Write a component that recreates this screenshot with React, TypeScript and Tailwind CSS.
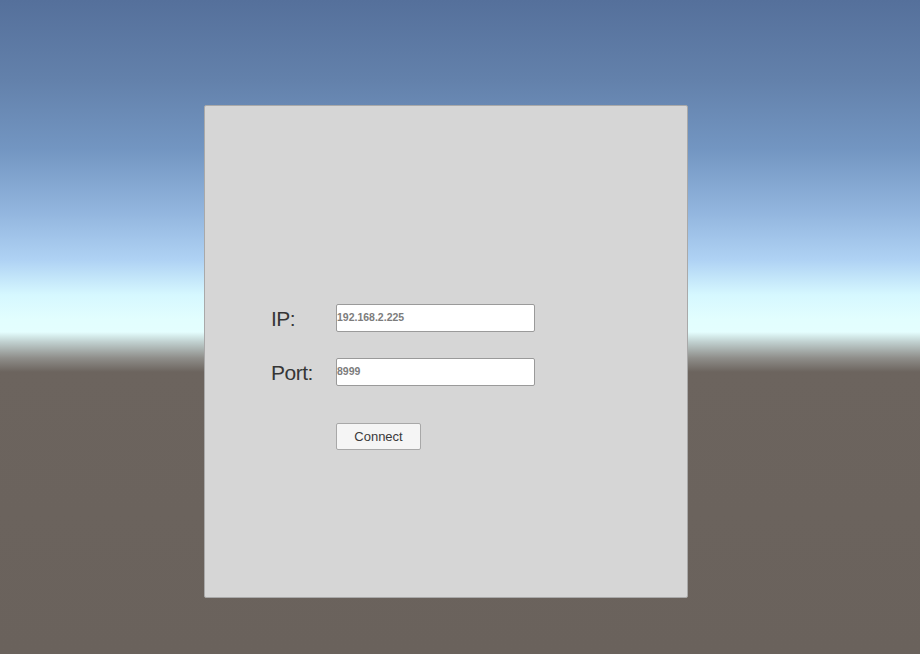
import React from "react";

export default function App() {
  return (
    <div
      className="w-[920px] h-[654px] overflow-hidden pt-[105px] pl-[204px] bg-[linear-gradient(to_bottom,#55709b_0px,#6381ab_80px,#7396c2_150px,#91b4dd_210px,#afd2f4_260px,#d6f8ff_295px,#e2fefe_320px,#e4fefe_332px,#c0d0cf_342px,#8f8e8a_358px,#6c645e_372px,#6a625c_654px)]"
      style={{ fontFamily: '"Liberation Sans", Arial, sans-serif' }}
    >
      <div className="w-[484px] h-[493px] bg-[#d6d6d6] border border-[#a9a9a9] rounded-[2px] pt-[198px] pl-[66px]">
        <div className="flex items-center h-[28px]">
          <span className="w-[65px] text-[21px] tracking-[-0.5px] leading-none text-[#363636]">IP:</span>
          <div className="w-[199px] h-[28px] bg-white border border-[#9a9a9a] rounded-[2px] flex items-center pl-0 text-[10.5px] font-bold text-[#7c7c7c]">
            192.168.2.225
          </div>
        </div>
        <div className="flex items-center h-[28px] mt-[26px]">
          <span className="w-[65px] text-[21px] tracking-[-0.5px] leading-none text-[#363636]">Port:</span>
          <div className="w-[199px] h-[28px] bg-white border border-[#9a9a9a] rounded-[2px] flex items-center pl-0 text-[10.5px] font-bold text-[#7c7c7c]">
            8999
          </div>
        </div>
        <div className="pl-[65px] mt-[37px]">
          <div className="w-[85px] h-[27px] bg-[#f5f5f5] border border-[#a8a8a8] rounded-[2px] flex items-center justify-center text-[13px] text-[#3a3a3a]">
            Connect
          </div>
        </div>
      </div>
    </div>
  );
}
